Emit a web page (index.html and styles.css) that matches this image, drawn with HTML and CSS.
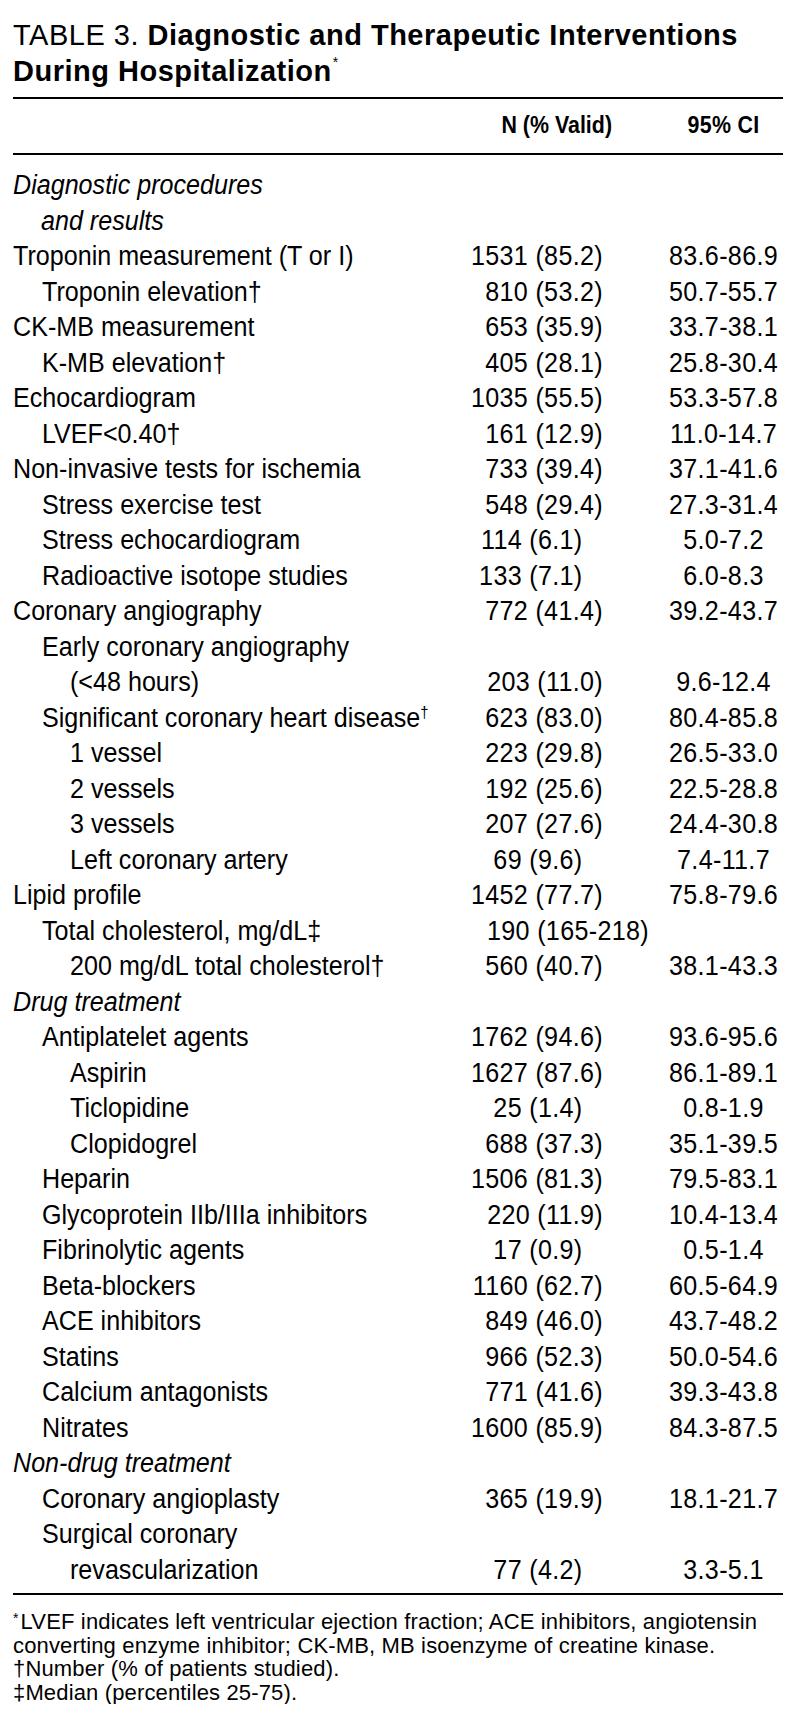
FILE: index.html
```html
<!DOCTYPE html>
<html>
<head>
<meta charset="utf-8">
<link rel="stylesheet" href="styles.css">
</head>
<body>
<div class="page">
  <h1 class="title">
    <span class="tline">TABLE 3. <b>Diagnostic and Therapeutic Interventions</b></span>
    <span class="tline"><b>During Hospitalization</b><sup class="tstar">*</sup></span>
  </h1>
  <div class="tbl">
    <div class="head">
      <span class="lab"></span>
      <span class="hn">N (% Valid)</span>
      <span class="ci">95% CI</span>
    </div>
    <div class="body">
      <div class="row sec"><span class="lab l0 wrap">Diagnostic procedures<br>and results</span></div>
      <div class="row"><span class="lab l0">Troponin measurement (T or I)</span><span class="n">1531 (85.2)</span><span class="ci">83.6-86.9</span></div>
      <div class="row"><span class="lab l1">Troponin elevation†</span><span class="n">810 (53.2)</span><span class="ci">50.7-55.7</span></div>
      <div class="row"><span class="lab l0">CK-MB measurement</span><span class="n">653 (35.9)</span><span class="ci">33.7-38.1</span></div>
      <div class="row"><span class="lab l1">K-MB elevation†</span><span class="n">405 (28.1)</span><span class="ci">25.8-30.4</span></div>
      <div class="row"><span class="lab l0">Echocardiogram</span><span class="n">1035 (55.5)</span><span class="ci">53.3-57.8</span></div>
      <div class="row"><span class="lab l1">LVEF&lt;0.40†</span><span class="n">161 (12.9)</span><span class="ci">11.0-14.7</span></div>
      <div class="row"><span class="lab l0">Non-invasive tests for ischemia</span><span class="n">733 (39.4)</span><span class="ci">37.1-41.6</span></div>
      <div class="row"><span class="lab l1">Stress exercise test</span><span class="n">548 (29.4)</span><span class="ci">27.3-31.4</span></div>
      <div class="row"><span class="lab l1">Stress echocardiogram</span><span class="n short">114 (6.1)</span><span class="ci">5.0-7.2</span></div>
      <div class="row"><span class="lab l1">Radioactive isotope studies</span><span class="n short">133 (7.1)</span><span class="ci">6.0-8.3</span></div>
      <div class="row"><span class="lab l0">Coronary angiography</span><span class="n">772 (41.4)</span><span class="ci">39.2-43.7</span></div>
      <div class="row"><span class="lab l1 wrap">Early coronary angiography<br>(&lt;48 hours)</span><span class="n">203 (11.0)</span><span class="ci">9.6-12.4</span></div>
      <div class="row"><span class="lab l1">Significant coronary heart disease<sup class="dag">†</sup></span><span class="n">623 (83.0)</span><span class="ci">80.4-85.8</span></div>
      <div class="row"><span class="lab l2">1 vessel</span><span class="n">223 (29.8)</span><span class="ci">26.5-33.0</span></div>
      <div class="row"><span class="lab l2">2 vessels</span><span class="n">192 (25.6)</span><span class="ci">22.5-28.8</span></div>
      <div class="row"><span class="lab l2">3 vessels</span><span class="n">207 (27.6)</span><span class="ci">24.4-30.8</span></div>
      <div class="row"><span class="lab l2">Left coronary artery</span><span class="n short">69 (9.6)</span><span class="ci">7.4-11.7</span></div>
      <div class="row"><span class="lab l0">Lipid profile</span><span class="n">1452 (77.7)</span><span class="ci">75.8-79.6</span></div>
      <div class="row"><span class="lab l1">Total cholesterol, mg/dL‡</span><span class="nmed">190 (165-218)</span></div>
      <div class="row"><span class="lab l2">200 mg/dL total cholesterol†</span><span class="n">560 (40.7)</span><span class="ci">38.1-43.3</span></div>
      <div class="row sec"><span class="lab l0">Drug treatment</span></div>
      <div class="row"><span class="lab l1">Antiplatelet agents</span><span class="n">1762 (94.6)</span><span class="ci">93.6-95.6</span></div>
      <div class="row"><span class="lab l2">Aspirin</span><span class="n">1627 (87.6)</span><span class="ci">86.1-89.1</span></div>
      <div class="row"><span class="lab l2">Ticlopidine</span><span class="n short">25 (1.4)</span><span class="ci">0.8-1.9</span></div>
      <div class="row"><span class="lab l2">Clopidogrel</span><span class="n">688 (37.3)</span><span class="ci">35.1-39.5</span></div>
      <div class="row"><span class="lab l1">Heparin</span><span class="n">1506 (81.3)</span><span class="ci">79.5-83.1</span></div>
      <div class="row"><span class="lab l1">Glycoprotein IIb/IIIa inhibitors</span><span class="n">220 (11.9)</span><span class="ci">10.4-13.4</span></div>
      <div class="row"><span class="lab l1">Fibrinolytic agents</span><span class="n short">17 (0.9)</span><span class="ci">0.5-1.4</span></div>
      <div class="row"><span class="lab l1">Beta-blockers</span><span class="n">1160 (62.7)</span><span class="ci">60.5-64.9</span></div>
      <div class="row"><span class="lab l1">ACE inhibitors</span><span class="n">849 (46.0)</span><span class="ci">43.7-48.2</span></div>
      <div class="row"><span class="lab l1">Statins</span><span class="n">966 (52.3)</span><span class="ci">50.0-54.6</span></div>
      <div class="row"><span class="lab l1">Calcium antagonists</span><span class="n">771 (41.6)</span><span class="ci">39.3-43.8</span></div>
      <div class="row"><span class="lab l1">Nitrates</span><span class="n">1600 (85.9)</span><span class="ci">84.3-87.5</span></div>
      <div class="row sec"><span class="lab l0">Non-drug treatment</span></div>
      <div class="row"><span class="lab l1">Coronary angioplasty</span><span class="n">365 (19.9)</span><span class="ci">18.1-21.7</span></div>
      <div class="row"><span class="lab l1 wrap">Surgical coronary<br>revascularization</span><span class="n short">77 (4.2)</span><span class="ci">3.3-5.1</span></div>
    </div>
  </div>
  <div class="notes">
    <div class="note"><sup class="nstar">*</sup>LVEF indicates left ventricular ejection fraction; ACE inhibitors, angiotensin</div>
    <div class="note">converting enzyme inhibitor; CK-MB, MB isoenzyme of creatine kinase.</div>
    <div class="note">†Number (% of patients studied).</div>
    <div class="note">‡Median (percentiles 25-75).</div>
  </div>
</div>
</body>
</html>
```

FILE: styles.css
```css
html, body {
  margin: 0;
  padding: 0;
  background: #ffffff;
  color: #000000;
}

.page {
  width: 770px;
  padding: 17px 10px 0 13px;
  font-family: "Liberation Sans", Arial, sans-serif;
}

.title {
  margin: 0;
  font-size: 29px;
  line-height: 36px;
  font-weight: normal;
  letter-spacing: 0.5px;
}

.tline {
  display: block;
  white-space: nowrap;
}

.title b {
  font-weight: bold;
}

.tstar {
  font-size: 14px;
  line-height: 0;
  vertical-align: 14px;
  margin-left: 1px;
}

/* The table is set in a condensed face: Liberation Sans compressed horizontally. */
.tbl {
  width: 828px;
  margin-top: 8px;
  border-top: 2px solid #000;
  border-bottom: 2px solid #000;
  transform: scaleX(0.93);
  transform-origin: 0 0;
}

.head,
.row {
  display: grid;
  grid-template-columns: 491.4px 143px 65.6px 128px;
}

.head {
  padding: 11px 0 13px;
  border-bottom: 2px solid #000;
  font-weight: bold;
  font-size: 23px;
  line-height: 30px;
}

.hn {
  grid-column: 2 / 4;
  text-align: right;
  padding-right: 55.9px;
}

.head .ci {
  grid-column: 4;
}

.body {
  padding: 13px 0 5px;
  font-size: 27px;
  line-height: 35.5px;
}

.lab {
  grid-column: 1;
  white-space: nowrap;
}

.l0 { padding-left: 0; }
.l1 { padding-left: 31.2px; }
.l2 { padding-left: 61.3px; }

.wrap.l0 { padding-left: 30.1px; text-indent: -30.1px; }
.wrap.l1 { padding-left: 61.3px; text-indent: -30.1px; }

.sec .lab {
  font-style: italic;
}

.n,
.ci,
.nmed {
  align-self: end;
  white-space: nowrap;
  letter-spacing: 0.35px;
}

.n {
  grid-column: 2;
  text-align: right;
}

.n.short {
  padding-right: 22px;
}

.ci {
  grid-column: 4;
  text-align: center;
}

.nmed {
  grid-column: 2 / 4;
  padding-left: 18.3px;
}

.dag {
  font-size: 16px;
  line-height: 0;
  vertical-align: 9px;
}

.notes {
  padding-top: 15px;
  font-size: 22px;
  line-height: 23.6px;
  letter-spacing: 0.15px;
}

.note {
  white-space: nowrap;
}

.nstar {
  font-size: 14px;
  line-height: 0;
  vertical-align: 6px;
  margin-right: 2px;
}
```
